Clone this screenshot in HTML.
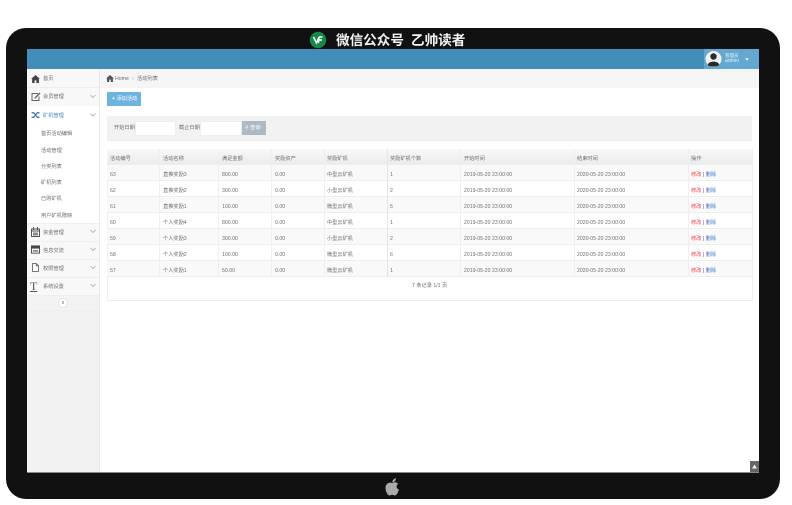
<!DOCTYPE html>
<html lang="zh"><head><meta charset="utf-8"><title>活动列表</title>
<style>
html,body{margin:0;padding:0;background:#fff}
body{width:792px;height:505px;position:relative;overflow:hidden;font-family:"Liberation Sans","Noto Sans CJK SC",sans-serif;color:#555}
div,span,svg{position:absolute}
.t{white-space:nowrap;font-size:5.2px;line-height:8px;color:#6e6e6e;filter:blur(.3px);margin-top:1px}
.n{left:27px;width:72px;border-bottom:1px solid #eee;background:#f8f8f8}
.s{left:41px}
.r{left:107px;width:645px;height:16px;border-bottom:1px solid #eee;box-sizing:border-box}
.c{top:149px;width:1px;height:128px;background:#efefef}
.i{filter:blur(.3px)}
.a{color:#e44}.a span{position:static}.a .p{color:#557}.a .d{color:#4a6fd0}
</style></head><body>
<div style="left:6px;top:28px;width:774px;height:471px;background:#111;border-radius:20px"></div>
<div style="left:27px;top:49px;width:732px;height:423px;background:#fff;box-shadow:0 1px 0 #888"></div>

<!-- title -->
<svg class="i" style="left:309px;top:31px" width="18" height="18" viewBox="0 0 18 18"><circle cx="9" cy="9" r="8.2" fill="#14894a"/><path d="M4.500 6 L7.500 12 L10 6 M10 6 H13.500 M10.500 9 H13 M10 6 L9.500 12" stroke="#fff" stroke-width="1.500" fill="none"/></svg>
<div class="t" style="left:336px;top:32px;font-size:13.6px;line-height:17px;color:#f4f4f4;font-weight:700;margin:0;filter:blur(.2px)">微信公众号</div>
<div class="t" style="left:411px;top:32px;font-size:13.6px;line-height:17px;color:#f4f4f4;font-weight:700;margin:0;filter:blur(.2px)">乙帅读者</div>

<!-- navbar -->
<div style="left:27px;top:49px;width:732px;height:20px;background:#438eb9"></div>
<div style="left:704px;top:49px;width:55px;height:20px;background:#62a8d1"></div>
<svg class="i" style="left:705px;top:50px" width="17" height="18" viewBox="0 0 17 18"><circle cx="8.500" cy="9" r="8" fill="#f2f2f2"/><circle cx="8.500" cy="6.500" r="3.200" fill="#2a2a2a"/><path d="M2.800 15 C3 10.500 14 10.500 14.200 15 C12 17.200 5 17.200 2.800 15Z" fill="#2a2a2a"/></svg>
<div class="t" style="left:725px;top:51px;color:#e8f3fa;font-size:4.5px;line-height:7px">管理员</div>
<div class="t" style="left:725px;top:57px;color:#e8f3fa;font-size:5.2px;line-height:7px">admin</div>
<svg class="i" style="left:745px;top:58px" width="4" height="3" viewBox="0 0 5 4"><path d="M0 0.500H5L2.500 3.500Z" fill="#fff"/></svg>

<!-- sidebar -->
<div style="left:27px;top:69px;width:72px;height:403px;background:#f2f2f2;border-right:1px solid #e8e8e8"></div>
<div class="n" style="top:69px;height:18px"></div>
<div class="n" style="top:88px;height:18px"></div>
<div class="n" style="top:106px;height:18px;background:#fff"></div>
<div style="left:27px;top:124px;width:72px;height:99px;background:#fff;border-bottom:1px solid #eee"></div>
<div class="n" style="top:224px;height:17px"></div>
<div class="n" style="top:242px;height:17px"></div>
<div class="n" style="top:260px;height:17px"></div>
<div class="n" style="top:278px;height:17px"></div>
<div style="left:27px;top:296px;width:72px;height:14px;background:#f3f3f3;border-bottom:1px solid #eee"></div>

<svg class="i" style="left:31px;top:75px" width="9" height="8" viewBox="0 0 10 9"><path d="M5 0 L10 4.500 H8.800 V9 H6 V6 H4 V9 H1.200 V4.500 H0Z" fill="#444"/></svg>
<div class="t" style="left:43px;top:74px">首页</div>
<svg class="i" style="left:31px;top:92px" width="10" height="9" viewBox="0 0 10 9"><path d="M7 1.500 H1 V8.500 H8 V4.500" stroke="#666" fill="none"/><path d="M3.500 5.500 L8.500 0.500 L9.500 1.500 L4.500 6.500 H3.500Z" fill="#666"/></svg>
<div class="t" style="left:43px;top:92px">会员管理</div>
<svg class="i" style="left:31px;top:111px" width="10" height="8" viewBox="0 0 10 9"><path d="M0 2 H2.500 L6.500 7 H9 M0 7 H2.500 L6.500 2 H9" stroke="#3b70ad" stroke-width="1.400" fill="none"/></svg>
<div class="t" style="left:43px;top:111px;color:#4b80b8">矿机管理</div>

<div class="t s" style="top:129px">首页活动编辑</div>
<div class="t s" style="top:146px">活动管理</div>
<div class="t s" style="top:162px">分类列表</div>
<div class="t s" style="top:178px">矿机列表</div>
<div class="t s" style="top:194px">已购矿机</div>
<div class="t s" style="top:211px">用户矿机赠映</div>

<svg class="i" style="left:31px;top:227px" width="9" height="10" viewBox="0 0 9 10"><path d="M0.500 2 H8.500 V9.500 H0.500Z M0.500 4 H8.500" stroke="#555" fill="none"/><path d="M2.500 0 V3 M6.500 0 V3" stroke="#555"/><rect x="2" y="5.500" width="5" height="3" fill="#888"/></svg>
<div class="t" style="left:43px;top:228px">资金管理</div>
<svg class="i" style="left:31px;top:245px" width="9" height="9" viewBox="0 0 10 9"><rect x="0.500" y="0.500" width="9" height="8" fill="#fff" stroke="#444"/><rect x="0.500" y="0.500" width="9" height="3" fill="#444"/><rect x="2" y="5" width="6" height="2" fill="#888"/></svg>
<div class="t" style="left:43px;top:246px">信息交流</div>
<svg class="i" style="left:32px;top:263px" width="7" height="9" viewBox="0 0 8 10"><path d="M0.500 0.500 H5 L7.500 3 V9.500 H0.500Z M5 0.500 V3 H7.500" stroke="#666" fill="#fff"/></svg>
<div class="t" style="left:43px;top:264px">权限管理</div>
<div class="t" style="left:30px;top:280px;font-family:'Liberation Serif',serif;font-size:12px;line-height:12px;color:#555;margin:0;text-decoration:underline">T</div>
<div class="t" style="left:43px;top:282px">系统设置</div>

<svg class="i" style="left:90px;top:94px" width="6" height="26" viewBox="0 0 6 26" fill="none" stroke="#aaa" stroke-width=".8"><path d="M0.500 1 L3 3.500 L5.500 1M0.500 19.500 L3 22 L5.500 19.500"/></svg>
<svg class="i" style="left:90px;top:229px" width="6" height="60" viewBox="0 0 6 60" fill="none" stroke="#aaa" stroke-width=".8"><path d="M0.500 1 L3 3.500 L5.500 1M0.500 19 L3 21.500 L5.500 19M0.500 37 L3 39.500 L5.500 37M0.500 55 L3 57.500 L5.500 55"/></svg>
<div style="left:58px;top:298px;width:8px;height:8px;border-radius:50%;background:#fff;border:1px solid #e4e4e4"></div>
<div style="left:62px;top:301px;width:2px;height:3px;background:#bbb"></div>

<!-- breadcrumb -->
<div style="left:100px;top:69px;width:659px;height:19px;background:#f5f5f5"></div>
<svg class="i" style="left:106px;top:75px" width="8" height="7" viewBox="0 0 10 9"><path d="M5 0 L10 4.500 H8.800 V9 H6 V6 H4 V9 H1.200 V4.500 H0Z" fill="#555"/></svg>
<div class="t" style="left:115px;top:74px">Home</div>
<div class="t" style="left:132px;top:74px;color:#aaa">›</div>
<div class="t" style="left:137px;top:74px">活动列表</div>

<!-- add button -->
<div style="left:107px;top:92px;width:34px;height:14px;background:#6fb3e0"></div>
<div class="t" style="left:112px;top:94px;color:#fff"><b>+</b> 添加活动</div>

<!-- search -->
<div style="left:107px;top:116px;width:645px;height:24px;background:#f2f2f2;border-bottom:1px solid #eee"></div>
<div class="t" style="left:114px;top:123px">开始日期</div>
<div style="left:135px;top:121px;width:39px;height:13px;background:#fff;border:1px solid #eee"></div>
<div class="t" style="left:179px;top:123px">截止日期</div>
<div style="left:200px;top:121px;width:40px;height:13px;background:#fff;border:1px solid #eee"></div>
<div style="left:242px;top:121px;width:24px;height:14px;background:#abbac3"></div>
<div class="t" style="left:245px;top:123px;color:#fff">⚲ 查询</div>

<!-- table -->
<div style="left:107px;top:149px;width:645px;height:152px;border-bottom:1px solid #eee;box-sizing:border-box"></div>
<div style="left:107px;top:149px;width:1px;height:152px;background:#eee"></div>
<div style="left:752px;top:149px;width:1px;height:152px;background:#eee"></div>
<div class="r" style="top:149px;height:16px;background:linear-gradient(#f8f8f8,#ececec)"></div>
<div class="r" style="top:165px;background:#f9f9f9"></div>
<div class="r" style="top:181px"></div>
<div class="r" style="top:197px;background:#f9f9f9"></div>
<div class="r" style="top:213px"></div>
<div class="r" style="top:229px;background:#f9f9f9"></div>
<div class="r" style="top:245px"></div>
<div class="r" style="top:261px;background:#f9f9f9"></div>
<div class="c" style="left:159px"></div><div class="c" style="left:218px"></div><div class="c" style="left:271px"></div><div class="c" style="left:324px"></div><div class="c" style="left:387px;background:#e4e4e4"></div><div class="c" style="left:460px"></div><div class="c" style="left:574px"></div><div class="c" style="left:688px"></div>

<div style="left:0;top:1px">
<div class="t" style="left:110px;top:153px">活动编号</div><div class="t" style="left:163px;top:153px">活动名称</div><div class="t" style="left:222px;top:153px">满足金额</div><div class="t" style="left:275px;top:153px">奖励资产</div><div class="t" style="left:327px;top:153px">奖励矿机</div><div class="t" style="left:390px;top:153px">奖励矿机个数</div><div class="t" style="left:464px;top:153px">开始时间</div><div class="t" style="left:577px;top:153px">结束时间</div><div class="t" style="left:691px;top:153px">操作</div>

<div class="t" style="left:110px;top:169px">63</div><div class="t" style="left:163px;top:169px">直推奖励3</div><div class="t" style="left:222px;top:169px">800.00</div><div class="t" style="left:275px;top:169px">0.00</div><div class="t" style="left:327px;top:169px">中型云矿机</div><div class="t" style="left:390px;top:169px">1</div><div class="t" style="left:464px;top:169px">2019-05-20 23:00:00</div><div class="t" style="left:577px;top:169px">2020-05-20 23:00:00</div><div class="t a" style="left:691px;top:169px">修改 <span class="p">|</span> <span class="d">删除</span></div>

<div class="t" style="left:110px;top:185px">62</div><div class="t" style="left:163px;top:185px">直推奖励2</div><div class="t" style="left:222px;top:185px">300.00</div><div class="t" style="left:275px;top:185px">0.00</div><div class="t" style="left:327px;top:185px">小型云矿机</div><div class="t" style="left:390px;top:185px">2</div><div class="t" style="left:464px;top:185px">2019-05-20 23:00:00</div><div class="t" style="left:577px;top:185px">2020-05-20 23:00:00</div><div class="t a" style="left:691px;top:185px">修改 <span class="p">|</span> <span class="d">删除</span></div>

<div class="t" style="left:110px;top:201px">61</div><div class="t" style="left:163px;top:201px">直推奖励1</div><div class="t" style="left:222px;top:201px">100.00</div><div class="t" style="left:275px;top:201px">0.00</div><div class="t" style="left:327px;top:201px">微型云矿机</div><div class="t" style="left:390px;top:201px">5</div><div class="t" style="left:464px;top:201px">2019-05-20 23:00:00</div><div class="t" style="left:577px;top:201px">2020-05-20 23:00:00</div><div class="t a" style="left:691px;top:201px">修改 <span class="p">|</span> <span class="d">删除</span></div>

<div class="t" style="left:110px;top:217px">60</div><div class="t" style="left:163px;top:217px">个人奖励4</div><div class="t" style="left:222px;top:217px">800.00</div><div class="t" style="left:275px;top:217px">0.00</div><div class="t" style="left:327px;top:217px">中型云矿机</div><div class="t" style="left:390px;top:217px">1</div><div class="t" style="left:464px;top:217px">2019-05-20 23:00:00</div><div class="t" style="left:577px;top:217px">2020-05-20 23:00:00</div><div class="t a" style="left:691px;top:217px">修改 <span class="p">|</span> <span class="d">删除</span></div>

<div class="t" style="left:110px;top:233px">59</div><div class="t" style="left:163px;top:233px">个人奖励3</div><div class="t" style="left:222px;top:233px">300.00</div><div class="t" style="left:275px;top:233px">0.00</div><div class="t" style="left:327px;top:233px">小型云矿机</div><div class="t" style="left:390px;top:233px">2</div><div class="t" style="left:464px;top:233px">2019-05-20 23:00:00</div><div class="t" style="left:577px;top:233px">2020-05-20 23:00:00</div><div class="t a" style="left:691px;top:233px">修改 <span class="p">|</span> <span class="d">删除</span></div>

<div class="t" style="left:110px;top:249px">58</div><div class="t" style="left:163px;top:249px">个人奖励2</div><div class="t" style="left:222px;top:249px">100.00</div><div class="t" style="left:275px;top:249px">0.00</div><div class="t" style="left:327px;top:249px">微型云矿机</div><div class="t" style="left:390px;top:249px">6</div><div class="t" style="left:464px;top:249px">2019-05-20 23:00:00</div><div class="t" style="left:577px;top:249px">2020-05-20 23:00:00</div><div class="t a" style="left:691px;top:249px">修改 <span class="p">|</span> <span class="d">删除</span></div>

<div class="t" style="left:110px;top:265px">57</div><div class="t" style="left:163px;top:265px">个人奖励1</div><div class="t" style="left:222px;top:265px">50.00</div><div class="t" style="left:275px;top:265px">0.00</div><div class="t" style="left:327px;top:265px">微型云矿机</div><div class="t" style="left:390px;top:265px">1</div><div class="t" style="left:464px;top:265px">2019-05-20 23:00:00</div><div class="t" style="left:577px;top:265px">2020-05-20 23:00:00</div><div class="t a" style="left:691px;top:265px">修改 <span class="p">|</span> <span class="d">删除</span></div>

<div class="t" style="left:412px;top:280px">7 条记录 1/1 页</div>
</div>

<!-- scroll top -->
<div style="left:750px;top:461px;width:9px;height:11px;background:#666"></div>
<svg class="i" style="left:752px;top:464px" width="5" height="5" viewBox="0 0 5 5"><path d="M2.500 0.500 L5 4.500 H0Z" fill="#eee"/></svg>

<!-- apple logo -->
<svg class="i" style="left:385px;top:478px" width="15" height="18" viewBox="0 0 15 18"><path d="M7.500 5 C9 4 11.500 3.800 13 6 C11 7.300 11 10.500 14 11.700 C13 14.500 11.500 17.500 9.800 17.500 C8.800 17.500 8.300 16.800 7.200 16.800 C6 16.800 5.500 17.500 4.500 17.500 C2.800 17.500 0.500 13.500 0.500 10 C0.500 6 3.500 3.800 7.500 5Z" fill="#aaa"/><path d="M7.300 4.300 C7.300 2.300 9 0.600 11 0.300 C11 2.500 9.500 4.200 7.300 4.300Z" fill="#aaa"/></svg>
</body></html>
